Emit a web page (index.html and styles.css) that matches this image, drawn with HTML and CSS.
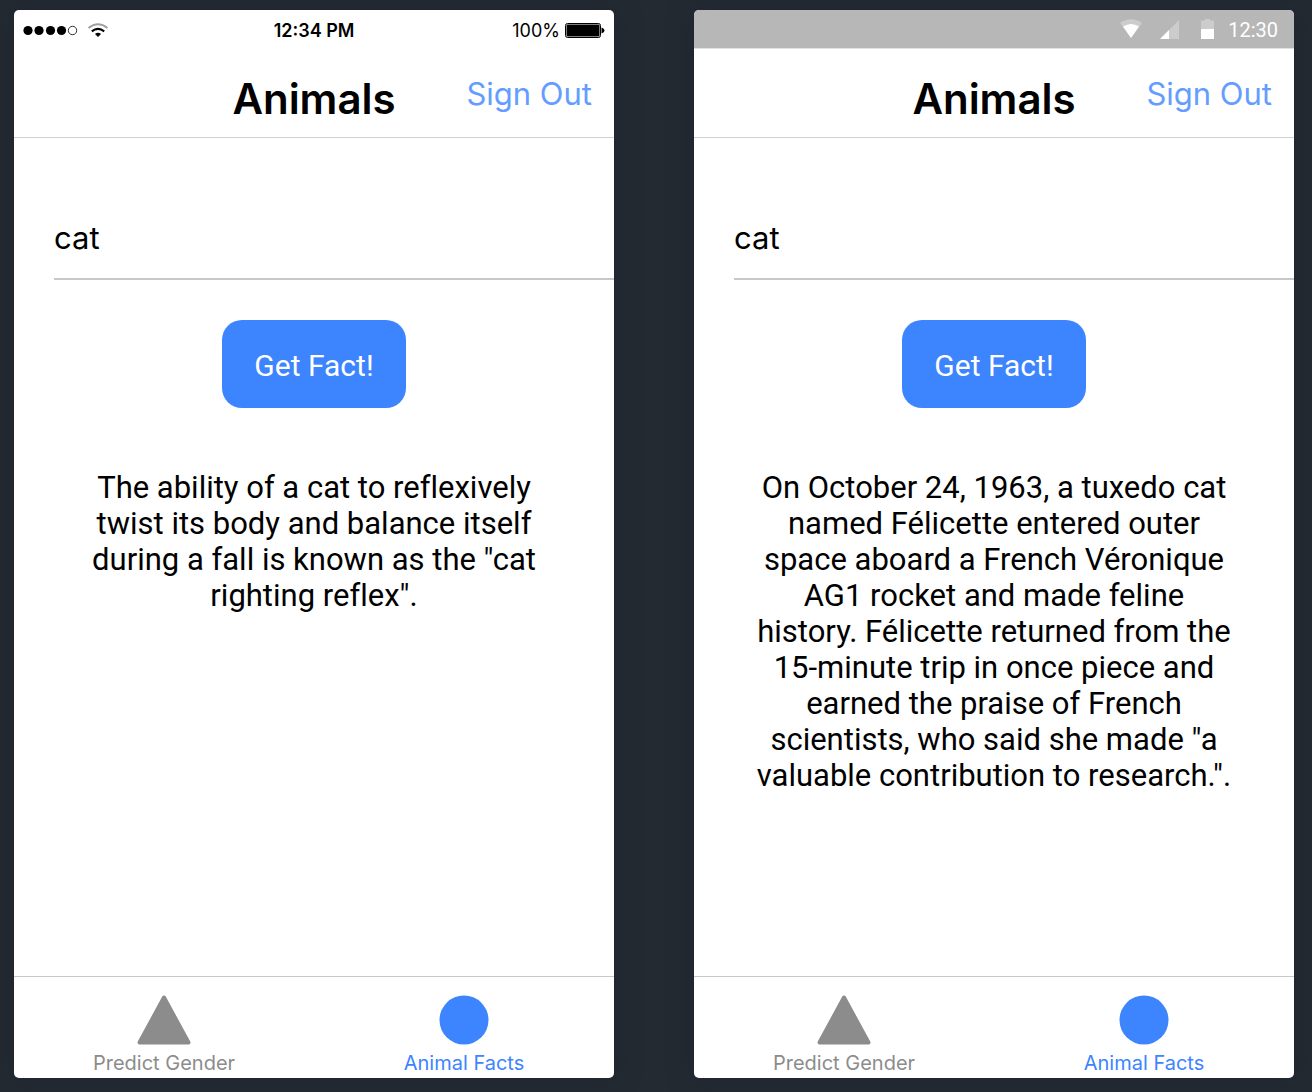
FILE: index.html
```html
<!DOCTYPE html>
<html lang="en">
<head>
<meta charset="utf-8">
<meta name="viewport" content="width=device-width, initial-scale=1">
<title>Animals</title>
<link rel="stylesheet" href="styles.css">
</head>
<body>
<main class="stage">
  <section class="phone" aria-label="iOS preview">
    <div class="status status-ios">
      <div class="status-side">
        <svg width="86" height="18" viewBox="0 0 86 18" aria-hidden="true">
          <circle cx="5" cy="8.500" r="4.6"/><circle cx="16" cy="8.500" r="4.6"/><circle cx="27.500" cy="8.500" r="4.6"/><circle cx="38.500" cy="8.500" r="4.6"/>
          <circle cx="49.500" cy="8.500" r="4.200" fill="#fff" stroke="#000" stroke-width=".8"/>
          <path d="M65.500 6Q75 -1.400 84.500 6" fill="none" stroke="#a0a0a0" stroke-width="2"/>
          <path d="M68.800 9.400Q75 4.300 81.200 9.400" fill="none" stroke="#000" stroke-width="2.100"/>
          <path d="M72 12Q75 9.400 78 12L75 15Z"/>
        </svg>
      </div>
      <span class="status-time">12:34 PM</span>
      <div class="status-side status-end">
        <span>100%</span>
        <svg width="40" height="18" viewBox="0 0 40 18" aria-hidden="true">
          <rect x=".5" y="1.500" width="35" height="14" rx="2" fill="#fff" stroke="#000"/>
          <rect x="1.500" y="2.500" width="33" height="12" rx="1"/>
          <path d="M36.500 5.500Q39.500 6.500 39.500 8.500T36.500 11.500Z"/>
        </svg>
      </div>
    </div>
    <header class="nav">
      <h1 class="title">Animals</h1>
      <a class="sign-out" href="#">Sign Out</a>
    </header>
    <div class="content">
      <input class="animal" type="text" value="cat" aria-label="Animal">
      <button class="get-fact" type="button">Get Fact!</button>
      <p class="fact">The ability of a cat to reflexively twist its body and balance itself during a fall is known as the "cat righting reflex".</p>
    </div>
    <nav class="tabs">
      <a class="tab" href="#">
        <svg width="54" height="52" viewBox="0 0 54 52" aria-hidden="true"><path d="M27 3.500L51.500 48.500H2.500Z" fill="currentColor" stroke="currentColor" stroke-width="4" stroke-linejoin="round"/></svg>
        <span>Predict Gender</span>
      </a>
      <a class="tab active" href="#" aria-current="page">
        <svg width="54" height="52" viewBox="0 0 54 52" aria-hidden="true"><circle cx="27" cy="26" r="24.500" fill="currentColor"/></svg>
        <span>Animal Facts</span>
      </a>
    </nav>
  </section>
  <section class="phone" aria-label="Android preview">
    <div class="status status-android">
      <svg width="96" height="24" viewBox="0 0 96 24" fill="#fff" aria-hidden="true">
        <path d="M0 5Q11 -2.500 22 5L11 20Z" opacity=".3"/>
        <path d="M3 8.500Q11 3.500 19 8.500L11 20Z"/>
        <path d="M40 21L59 2V21Z" opacity=".3"/>
        <path d="M40 21L49 12V21Z"/>
        <path d="M81 2.500H85V1H90V2.500H94V11H81Z" opacity=".3"/>
        <path d="M81 11H94V21H81Z"/>
      </svg>
      <span>12:30</span>
    </div>
    <header class="nav">
      <h1 class="title">Animals</h1>
      <a class="sign-out" href="#">Sign Out</a>
    </header>
    <div class="content">
      <input class="animal" type="text" value="cat" aria-label="Animal">
      <button class="get-fact" type="button">Get Fact!</button>
      <p class="fact">On October 24, 1963, a tuxedo cat named Félicette entered outer space aboard a French Véronique AG1 rocket and made feline history. Félicette returned from the 15-minute trip in once piece and earned the praise of French scientists, who said she made "a valuable contribution to research.".</p>
    </div>
    <nav class="tabs">
      <a class="tab" href="#">
        <svg width="54" height="52" viewBox="0 0 54 52" aria-hidden="true"><path d="M27 3.500L51.500 48.500H2.500Z" fill="currentColor" stroke="currentColor" stroke-width="4" stroke-linejoin="round"/></svg>
        <span>Predict Gender</span>
      </a>
      <a class="tab active" href="#" aria-current="page">
        <svg width="54" height="52" viewBox="0 0 54 52" aria-hidden="true"><circle cx="27" cy="26" r="24.500" fill="currentColor"/></svg>
        <span>Animal Facts</span>
      </a>
    </nav>
  </section>
</main>
</body>
</html>
```
FILE: styles.css
```css
* {
  box-sizing: border-box;
}

body {
  margin: 0;
  background: #232a32;
  color: #000;
  font-family: Inter, "Liberation Sans", sans-serif;
}

.stage {
  display: grid;
  grid-template-columns: 1fr 1fr;
  gap: 80px;
  min-height: 100vh;
  padding: 10px 18px 14px 14px;
}

.phone {
  display: flex;
  flex-direction: column;
  overflow: hidden;
  border-radius: 5px;
  background: #fff;
  box-shadow: 0 0 24px rgba(32, 32, 44, 0.5);
}

.status {
  display: flex;
  align-items: center;
  height: 38px;
  font-size: 18px;
  line-height: 24px;
}

.status-ios {
  padding: 3px 9px 0;
}

.status-side {
  display: flex;
  flex: 1;
  align-items: center;
  gap: 5px;
}

.status-end {
  justify-content: flex-end;
}

.status-time {
  font-weight: 600;
}

.status-android {
  justify-content: flex-end;
  gap: 12px;
  padding: 2px 16px 0;
  background: #b7b7b7;
  color: #fff;
  font-family: Roboto, sans-serif;
  font-size: 20px;
}

.nav {
  display: grid;
  grid-template-columns: 1fr auto 1fr;
  align-items: center;
  height: 90px;
  padding: 0 22px;
  border-bottom: 1px solid #d0d0d2;
}

.status-android + .nav {
  border-top: 1px solid #e2e2e2;
}

.title {
  grid-column: 2;
  margin: 0;
  padding-top: 12px;
  font-size: 42px;
  font-weight: 600;
  line-height: 52px;
}

.sign-out {
  justify-self: end;
  padding-top: 2px;
  color: #649dff;
  font-size: 31px;
  line-height: 40px;
  text-decoration: none;
}

.content {
  display: flex;
  flex: 1;
  flex-direction: column;
  align-items: center;
  padding: 60px 0 40px 40px;
}

.animal {
  width: 100%;
  height: 82px;
  padding: 0 0 2px;
  border: 0;
  border-bottom: 2px solid #c7c7cc;
  border-radius: 0;
  outline: 0;
  background: transparent;
  color: #000;
  font: inherit;
  font-size: 31px;
}

.get-fact {
  height: 88px;
  margin: 40px 40px 0 0;
  padding: 2px 32px 0;
  border: 0;
  border-radius: 20px;
  background: #3d84ff;
  color: #fff;
  font-family: Roboto, sans-serif;
  font-size: 30px;
}

.fact {
  max-width: 480px;
  margin: 62px 40px 0 0;
  font-family: Roboto, sans-serif;
  font-size: 31px;
  font-variant-ligatures: none;
  line-height: 36px;
  text-align: center;
}

.tabs {
  display: grid;
  grid-template-columns: 1fr 1fr;
  height: 102px;
  border-top: 1px solid #c8c8ca;
}

.tab {
  display: flex;
  flex-direction: column;
  align-items: center;
  gap: 5px;
  padding-top: 17px;
  color: #8c8c8c;
  font-size: 20px;
  line-height: 24px;
  text-decoration: none;
}

.active {
  color: #3d84ff;
}
```
